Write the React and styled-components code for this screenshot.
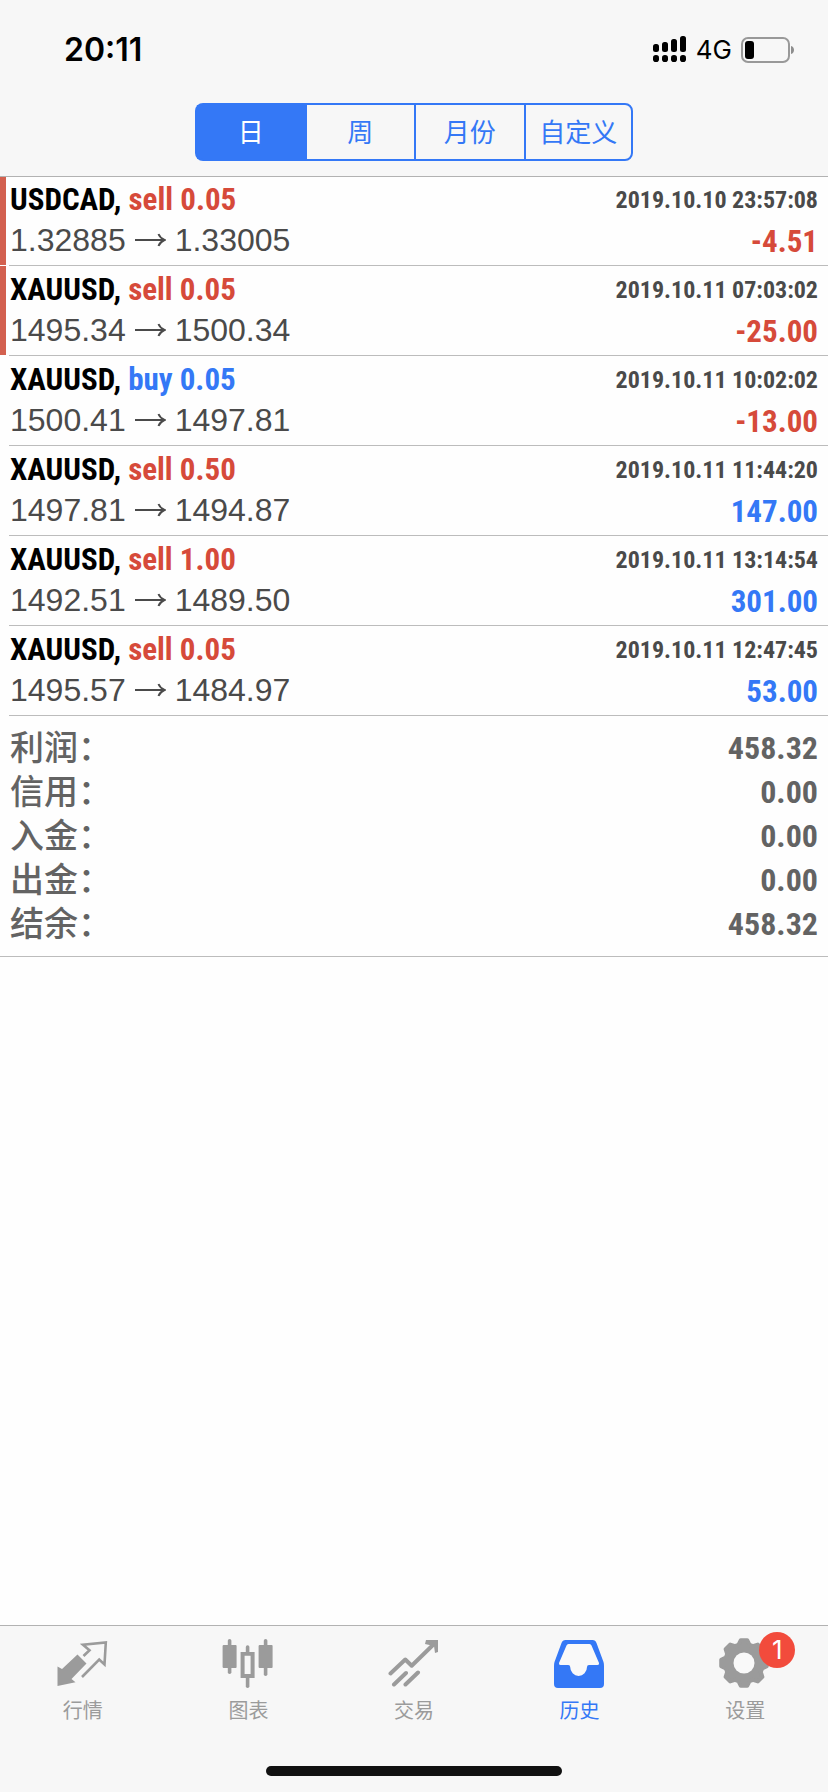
import React, { useState } from "react";
import styled, { createGlobalStyle } from "styled-components";

const BLUE = "#3478f6";
const RED = "#d64a3a";

const periods = ["日", "周", "月份", "自定义"];

const trades = [
  { symbol: "USDCAD", side: "sell", lots: "0.05", open: "1.32885", close: "1.33005", time: "2019.10.10 23:57:08", profit: "-4.51", marked: true },
  { symbol: "XAUUSD", side: "sell", lots: "0.05", open: "1495.34", close: "1500.34", time: "2019.10.11 07:03:02", profit: "-25.00", marked: true },
  { symbol: "XAUUSD", side: "buy", lots: "0.05", open: "1500.41", close: "1497.81", time: "2019.10.11 10:02:02", profit: "-13.00" },
  { symbol: "XAUUSD", side: "sell", lots: "0.50", open: "1497.81", close: "1494.87", time: "2019.10.11 11:44:20", profit: "147.00" },
  { symbol: "XAUUSD", side: "sell", lots: "1.00", open: "1492.51", close: "1489.50", time: "2019.10.11 13:14:54", profit: "301.00" },
  { symbol: "XAUUSD", side: "sell", lots: "0.05", open: "1495.57", close: "1484.97", time: "2019.10.11 12:47:45", profit: "53.00" },
];

const totals = [
  { label: "利润：", value: "458.32" },
  { label: "信用：", value: "0.00" },
  { label: "入金：", value: "0.00" },
  { label: "出金：", value: "0.00" },
  { label: "结余：", value: "458.32" },
];

function SignalIcon() {
  return (
    <svg width="34" height="27" viewBox="0 0 34 27" aria-hidden="true">
      <rect x="0" y="8" width="6" height="8" rx="2.5" />
      <rect x="9" y="6" width="6" height="10" rx="2.5" />
      <rect x="18" y="3" width="6" height="13" rx="2.5" />
      <rect x="27" y="0" width="6" height="16" rx="2.5" />
      <rect x="0" y="19" width="6" height="7" rx="2.8" />
      <rect x="9" y="19" width="6" height="7" rx="2.8" />
      <rect x="18" y="19" width="6" height="7" rx="2.8" />
      <rect x="27" y="19" width="6" height="7" rx="2.8" />
    </svg>
  );
}

function BatteryIcon() {
  return (
    <svg width="54" height="26" viewBox="0 0 54 26" aria-hidden="true">
      <rect x="1" y="1" width="47" height="24" rx="6" fill="none" stroke="#999" strokeWidth="2" />
      <rect x="4" y="4" width="9" height="18" rx="3" />
      <path d="M50 9c4 1 4 7 0 8z" fill="#8e8e8e" />
    </svg>
  );
}

function PriceArrow() {
  return (
    <svg width="31" height="14" viewBox="0 0 31 14" role="img" aria-label="→">
      <path d="M0 7h29.5M23.5 1q1.5 4 6 6q-4.5 2-6 6" fill="none" stroke="currentColor" strokeWidth="2" />
    </svg>
  );
}

function QuotesIcon() {
  return (
    <svg width="52" height="52" viewBox="0 0 52 52" aria-hidden="true">
      <path d="M.5 29.5 5 32 20.5 17.5l9 9L14.5 42l4 3.200L.5 49z" fill="currentColor" />
      <path
        d="M25 40 42.2 22.5l5.3 5L48.8 5.5 26 7.700l6.5 5.5L26.5 19"
        fill="none"
        stroke="currentColor"
        strokeWidth="2.6"
      />
    </svg>
  );
}

function ChartIcon() {
  return (
    <svg width="52" height="52" viewBox="0 0 52 52" fill="currentColor" aria-hidden="true">
      <rect x="0.6" y="8" width="14" height="23" rx="1" />
      <rect x="5.8" y="2" width="3.6" height="35" rx="1.8" />
      <rect x="36.6" y="8" width="14" height="23" rx="1" />
      <rect x="41.8" y="2" width="3.6" height="37" rx="1.8" />
      <path d="M18.6 15h14v26h-14zM22.6 18.7V37h6V18.7z" fillRule="evenodd" />
      <rect x="23.8" y="8.3" width="3.6" height="9" rx="1.8" />
      <rect x="23.8" y="39" width="3.6" height="12" rx="1.8" />
    </svg>
  );
}

function TradeIcon() {
  return (
    <svg width="52" height="52" viewBox="0 0 52 52" aria-hidden="true">
      <path
        d="M2.5 36.5 17.3 22.5l6.400 6.200L47 6M6 47.5 18 36M17.5 47.5 30 35.5"
        fill="none"
        stroke="currentColor"
        strokeWidth="4"
        strokeLinecap="round"
        strokeLinejoin="round"
      />
      <path d="M38 3h12v12l-3 1-1-7-9-2z" fill="currentColor" />
    </svg>
  );
}

function HistoryIcon() {
  return (
    <svg width="52" height="52" viewBox="0 0 52 52" aria-hidden="true">
      <path
        d="M11.5 3h27q3 0 4 3L49.5 25q.5 1.5.5 4v18q0 4-4 4H4q-4 0-4-4V29q0-2.5.5-4L7.5 6q1-3 4-3z"
        fill="currentColor"
      />
      <path
        d="M14.5 7h21q1.5 0 2 1.5L45 26q.5 2-1.5 2H35q-2 0-2 2a8.4 9 0 0 1-16.8 0q0-2-2-2H6.5Q4.5 28 5 26L12.5 8.5q.5-1.5 2-1.5z"
        fill="#f9f9f9"
      />
    </svg>
  );
}

// eight rounded teeth around a centre hole
const gearPoints = Array.from({ length: 8 }, (_, i) =>
  [[-17, 19], [-8, 23], [8, 23], [17, 19]].map(([offset, r]) => {
    const a = ((i * 45 + offset) * Math.PI) / 180;
    return `${(25 + r * Math.cos(a)).toFixed(2)},${(26 + r * Math.sin(a)).toFixed(2)}`;
  })
)
  .flat()
  .join(" ");

function SettingsIcon() {
  return (
    <svg width="52" height="52" viewBox="0 0 52 52" aria-hidden="true">
      <polygon points={gearPoints} fill="currentColor" stroke="currentColor" strokeWidth="4" strokeLinejoin="round" />
      <circle cx="25" cy="26" r="10.5" fill="#f9f9f9" />
    </svg>
  );
}

const tabs = [
  { name: "行情", icon: <QuotesIcon /> },
  { name: "图表", icon: <ChartIcon /> },
  { name: "交易", icon: <TradeIcon /> },
  { name: "历史", icon: <HistoryIcon /> },
  { name: "设置", icon: <SettingsIcon />, badge: 1 },
];

function Trade({ trade }) {
  return (
    <TradeItem $marked={trade.marked}>
      <TradeBody>
        <TradeLine>
          <Title>
            {trade.symbol}, <Side $side={trade.side}>{trade.side} {trade.lots}</Side>
          </Title>
          <Time>{trade.time}</Time>
        </TradeLine>
        <TradeLine>
          <Prices>
            <span>{trade.open}</span>
            <PriceArrow />
            <span>{trade.close}</span>
          </Prices>
          <Profit $loss={trade.profit.startsWith("-")}>{trade.profit}</Profit>
        </TradeLine>
      </TradeBody>
    </TradeItem>
  );
}

function App() {
  const [period, setPeriod] = useState("日");
  const [tab, setTab] = useState("历史");

  return (
    <>
      <GlobalStyle />
      <Screen>
        <Header>
          <StatusBar>
            <Clock>20:11</Clock>
            <StatusIcons>
              <SignalIcon />
              <Network>4G</Network>
              <BatteryIcon />
            </StatusIcons>
          </StatusBar>
          <Segmented>
            {periods.map((name) => (
              <Segment key={name} $active={period === name} aria-pressed={period === name} onClick={() => setPeriod(name)}>
                {name}
              </Segment>
            ))}
          </Segmented>
        </Header>

        <Content>
          <TradeList>
            {trades.map((trade) => (
              <Trade key={trade.time} trade={trade} />
            ))}
          </TradeList>
          <Totals>
            {totals.map(({ label, value }) => (
              <TotalRow key={label}>
                <TotalLabel>{label}</TotalLabel>
                <TotalValue>{value}</TotalValue>
              </TotalRow>
            ))}
          </Totals>
        </Content>

        <Footer>
          <TabBar>
            {tabs.map(({ name, icon, badge }) => (
              <Tab key={name} $active={tab === name} onClick={() => setTab(name)}>
                <TabIcon>
                  {icon}
                  {badge && <Badge>{badge}</Badge>}
                </TabIcon>
                <span>{name}</span>
              </Tab>
            ))}
          </TabBar>
          <HomeIndicator />
        </Footer>
      </Screen>
    </>
  );
}

export default App;

const GlobalStyle = createGlobalStyle`
  * {
    box-sizing: border-box;
  }

  body {
    margin: 0;
    background: #fefefe;
    font-family: "Liberation Sans", "Noto Sans CJK SC", sans-serif;
  }

  button {
    margin: 0;
    padding: 0;
    border: 0;
    background: none;
    font-family: inherit;
    cursor: pointer;
  }

  svg {
    display: block;
    flex: none;
  }
`;

const Screen = styled.div`
  display: flex;
  flex-direction: column;
  min-height: 100vh;
`;

const Header = styled.header`
  padding-bottom: 15px;
  background: #f7f7f7;
  border-bottom: 1px solid #b2b2b2;
`;

const StatusBar = styled.div`
  display: flex;
  align-items: center;
  justify-content: space-between;
  height: 99px;
  margin-bottom: 4px;
  padding: 0 33px 0 64px;
`;

const Clock = styled.span`
  font-family: Inter, sans-serif;
  font-size: 32px;
  font-weight: 600;
  color: #000;
`;

const StatusIcons = styled.div`
  display: flex;
  align-items: center;
  gap: 9px;
`;

const Network = styled.span`
  font-family: Inter, sans-serif;
  font-size: 26px;
  font-weight: 400;
  color: #000;
`;

const Segmented = styled.div`
  display: grid;
  grid-template-columns: repeat(4, 1fr);
  width: 438px;
  max-width: 100%;
  height: 58px;
  margin: 0 auto;
`;

const Segment = styled.button`
  padding-bottom: 4px;
  border: 2px solid ${BLUE};
  border-right-width: 0;
  font-size: 26px;
  color: ${(props) => (props.$active ? "#fff" : BLUE)};
  background: ${(props) => (props.$active ? BLUE : "transparent")};

  &:first-child {
    border-radius: 8px 0 0 8px;
  }

  &:last-child {
    border-right-width: 2px;
    border-radius: 0 8px 8px 0;
  }
`;

const Content = styled.main`
  flex: 1;
`;

const TradeList = styled.ul`
  margin: 0;
  padding: 0;
  list-style: none;
`;

const TradeBody = styled.div`
  padding: 1px 10px 4px 1px;
  border-bottom: 1px solid #bcbcbc;
`;

const TradeItem = styled.li`
  padding-left: 9px;
  background: linear-gradient(#d3604f, #d3604f) left top / ${(props) => (props.$marked ? "6px" : "0")} calc(100% - 1px) no-repeat;

  &:first-child ${TradeBody} {
    padding-top: 0;
  }
`;

const TradeLine = styled.div`
  display: flex;
  align-items: center;
  justify-content: space-between;
  height: 42px;
  line-height: 42px;
`;

const Condensed = styled.span`
  font-family: "Liberation Sans Narrow", "Arial Narrow", "Roboto Condensed", "Liberation Sans", sans-serif;
  font-weight: 700;
`;

const TradeText = styled(Condensed)`
  padding-top: 4px;
  line-height: 38px;
`;

const Title = styled(TradeText)`
  font-size: 31px;
  color: #000;
`;

const Side = styled.span`
  color: ${(props) => (props.$side === "buy" ? BLUE : RED)};
`;

const Time = styled(TradeText)`
  font-size: 24px;
  color: #4a4a4a;
`;

const Prices = styled.span`
  display: flex;
  align-items: center;
  gap: 9px;
  font-size: 32px;
  color: #4a4a4a;
`;

const Profit = styled(TradeText)`
  font-size: 31px;
  color: ${(props) => (props.$loss ? RED : BLUE)};
`;

const Totals = styled.dl`
  margin: 0;
  padding: 10px;
  border-bottom: 1px solid #bcbcbc;
`;

const TotalRow = styled.div`
  display: flex;
  align-items: center;
  justify-content: space-between;
  height: 44px;
  line-height: 44px;
  font-size: 34px;
  color: #636363;
`;

const TotalLabel = styled.dt`
  font-weight: 500;
`;

const TotalValue = styled(Condensed).attrs({ as: "dd" })`
  margin: 0;
  font-size: 32px;
`;

const Footer = styled.footer`
  display: flex;
  flex-direction: column;
  align-items: center;
  padding-bottom: 16px;
  background: #f7f7f7;
  border-top: 1px solid #b2b2b2;
`;

const TabBar = styled.nav`
  display: grid;
  grid-template-columns: repeat(5, 1fr);
  width: 100%;
  height: 140px;
`;

const Tab = styled.button`
  display: flex;
  flex-direction: column;
  align-items: center;
  gap: 7px;
  padding-top: 11px;
  font-size: 20px;
  line-height: 30px;
  color: ${(props) => (props.$active ? BLUE : "#9b9b9b")};
`;

const TabIcon = styled.span`
  position: relative;
`;

const Badge = styled.span`
  position: absolute;
  top: -5px;
  right: -24px;
  width: 36px;
  height: 36px;
  border-radius: 50%;
  background: #f24b3c;
  color: #fff;
  font-family: Inter, sans-serif;
  font-size: 26px;
  line-height: 36px;
  text-align: center;
`;

const HomeIndicator = styled.div`
  width: 296px;
  height: 10px;
  border-radius: 5px;
  background: #111;
`;
